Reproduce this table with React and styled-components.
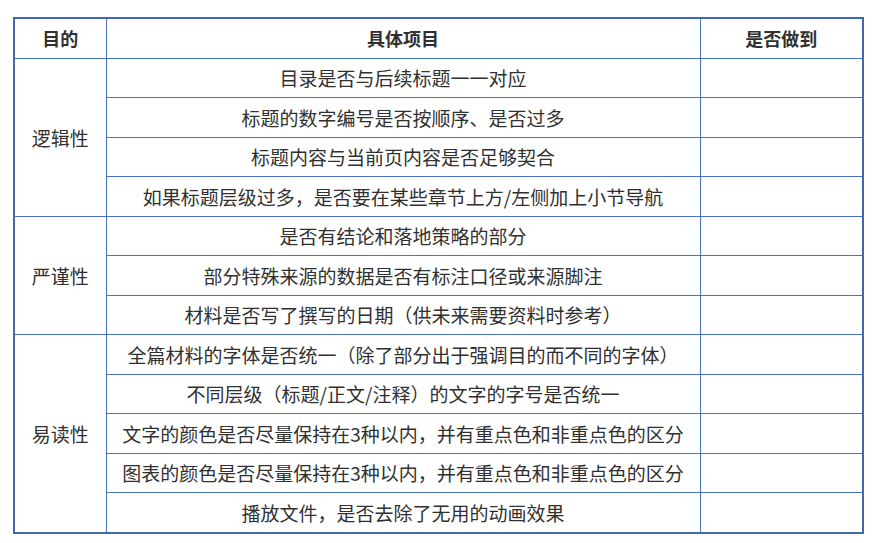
import React from 'react'
import styled, { createGlobalStyle } from 'styled-components'

const GlobalStyle = createGlobalStyle`
  html, body {
    margin: 0;
    padding: 0;
    background: #ffffff;
  }
  body {
    font-family: "Noto Sans CJK SC", "Noto Sans", sans-serif;
  }
`

const Page = styled.div`
  padding: 17px 12px 12px 13px;
`

const Table = styled.table`
  width: 849px;
  table-layout: fixed;
  border-collapse: collapse;
  border: 2px solid #4468b0;
  color: #303030;
  font-size: 19px;
`

const Col = styled.col`
  width: ${props => props.w}px;
`

const HeadCell = styled.th`
  height: 38.5px;
  padding: 0;
  font-weight: 700;
  font-size: 18px;
  text-align: center;
  border: 1.5px solid #4a72bd;
  line-height: 1;
`

const Cell = styled.td`
  height: 38.5px;
  padding: 0;
  font-weight: 400;
  text-align: center;
  vertical-align: middle;
  border: 1.5px solid #4a72bd;
  line-height: 1;
  white-space: nowrap;
`

const groups = [
  {
    name: '逻辑性',
    items: [
      '目录是否与后续标题一一对应',
      '标题的数字编号是否按顺序、是否过多',
      '标题内容与当前页内容是否足够契合',
      '如果标题层级过多，是否要在某些章节上方/左侧加上小节导航',
    ],
  },
  {
    name: '严谨性',
    items: [
      '是否有结论和落地策略的部分',
      '部分特殊来源的数据是否有标注口径或来源脚注',
      '材料是否写了撰写的日期（供未来需要资料时参考）',
    ],
  },
  {
    name: '易读性',
    items: [
      '全篇材料的字体是否统一（除了部分出于强调目的而不同的字体）',
      '不同层级（标题/正文/注释）的文字的字号是否统一',
      '文字的颜色是否尽量保持在3种以内，并有重点色和非重点色的区分',
      '图表的颜色是否尽量保持在3种以内，并有重点色和非重点色的区分',
      '播放文件，是否去除了无用的动画效果',
    ],
  },
]

export default function App() {
  return (
    <Page>
      <GlobalStyle />
      <Table>
        <colgroup>
          <Col w={92} />
          <Col w={594} />
          <Col w={163} />
        </colgroup>
        <thead>
          <tr>
            <HeadCell>目的</HeadCell>
            <HeadCell>具体项目</HeadCell>
            <HeadCell>是否做到</HeadCell>
          </tr>
        </thead>
        <tbody>
          {groups.map(group =>
            group.items.map((item, i) => (
              <tr key={item}>
                {i === 0 && <Cell rowSpan={group.items.length}>{group.name}</Cell>}
                <Cell>{item}</Cell>
                <Cell />
              </tr>
            ))
          )}
        </tbody>
      </Table>
    </Page>
  )
}
